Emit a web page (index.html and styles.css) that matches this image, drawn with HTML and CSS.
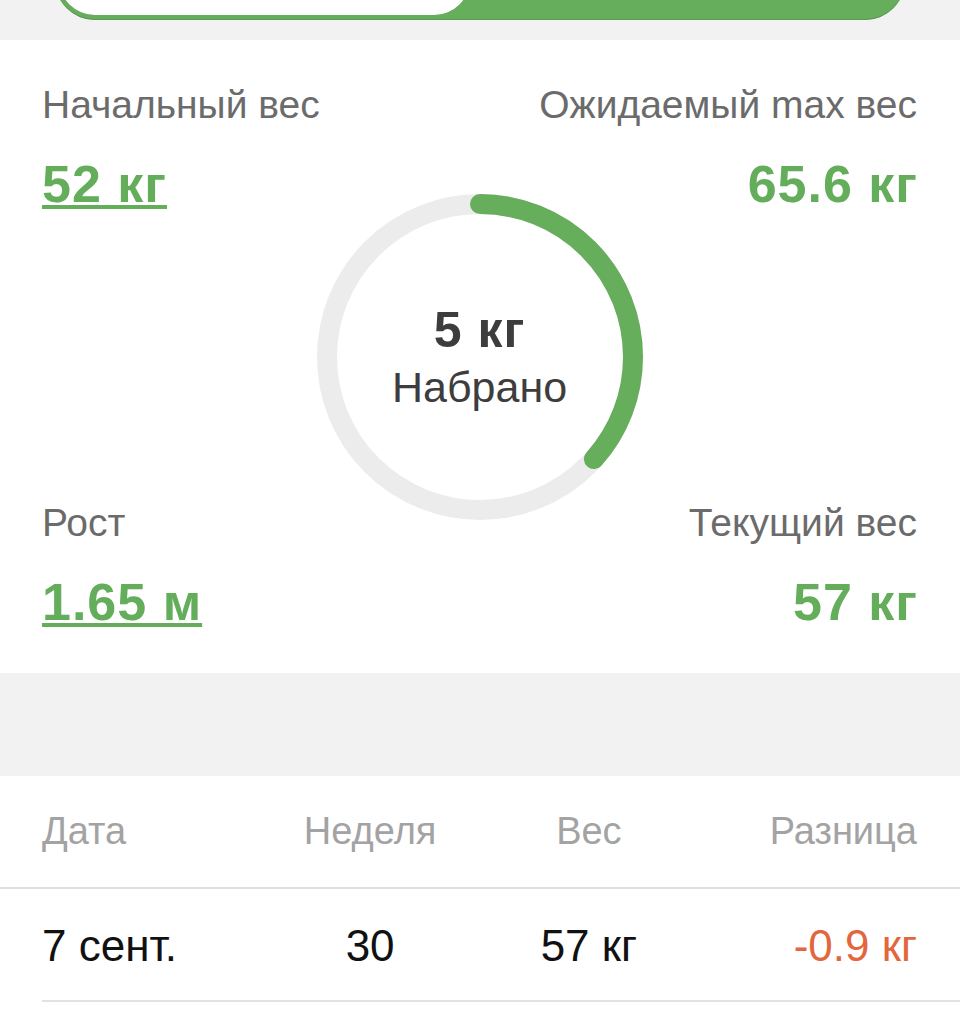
FILE: index.html
```html
<!DOCTYPE html>
<html>
<head>
  <meta charset="utf-8">
  <title>Вес</title>
  <link rel="stylesheet" href="styles.css">
</head>
<body>
  <div class="tabs-band">
    <div class="tabs">
      <div class="tab active"></div>
      <div class="tab"></div>
    </div>
  </div>

  <div class="summary">
    <div class="stat top-left">
      <div class="label">Начальный вес</div>
      <div class="value link">52 кг</div>
    </div>
    <div class="stat top-right">
      <div class="label">Ожидаемый max вес</div>
      <div class="value">65.6 кг</div>
    </div>

    <div class="ring">
      <svg width="326" height="326" viewBox="0 0 326 326">
        <circle class="ring-track" cx="163" cy="163" r="153"></circle>
        <circle class="ring-bar" cx="163" cy="163" r="153" stroke-dasharray="352 962" transform="rotate(-90 163 163)"></circle>
      </svg>
      <div class="ring-text">
        <div class="ring-value">5 кг</div>
        <div class="ring-label">Набрано</div>
      </div>
    </div>

    <div class="stat bottom-left">
      <div class="label">Рост</div>
      <div class="value link">1.65 м</div>
    </div>
    <div class="stat bottom-right">
      <div class="label">Текущий вес</div>
      <div class="value">57 кг</div>
    </div>
  </div>

  <div class="spacer"></div>

  <div class="log">
    <div class="log-head">
      <div>Дата</div>
      <div>Неделя</div>
      <div>Вес</div>
      <div>Разница</div>
    </div>
    <div class="log-row">
      <div>7 сент.</div>
      <div>30</div>
      <div>57 кг</div>
      <div class="diff">-0.9 кг</div>
    </div>
  </div>
</body>
</html>
```

FILE: styles.css
```css
body {
  margin: 0;
  background-color: #fff;
  font-family: "Liberation Sans", Arial, sans-serif;
  color: #111;
}
.tabs-band {
  height: 40px;
  overflow: hidden;
  background-color: #f2f2f2;
}
.tabs {
  display: flex;
  box-sizing: border-box;
  height: 80px;
  margin: -60px 55px 0 55px;
  padding: 0 4px 5px 4px;
  border-radius: 40px;
  background-color: #66ad5c;
  box-shadow: inset 0 -1px 0 #5a9a52;
}
.tab {
  flex: 1;
}
.tab.active {
  flex: 0 0 411px;
  border-radius: 0 0 36px 36px;
  background-color: #fff;
}

.summary {
  display: grid;
  grid-template-columns: 1fr 1fr;
  grid-template-rows: auto 289px auto;
  padding: 43px 43px 43px 42px;
}
.stat {
  position: relative;
  z-index: 1;
}
.top-left { grid-area: 1 / 1; }
.top-right { grid-area: 1 / 2; text-align: right; }
.bottom-left { grid-area: 3 / 1; }
.bottom-right { grid-area: 3 / 2; text-align: right; }
.label {
  font-size: 39px;
  line-height: 44px;
  color: #6b6b6b;
}
.value {
  margin-top: 29px;
  font-size: 52px;
  line-height: 56px;
  font-weight: bold;
  letter-spacing: 1px;
  color: #64ad5b;
}
.top-right .value,
.bottom-right .value {
  margin-right: -1px;
}
.value.link {
  text-decoration: underline;
  text-decoration-thickness: 4px;
  text-underline-offset: 3px;
}

.ring {
  grid-column: 1 / -1;
  grid-row: 1 / -1;
  justify-self: center;
  align-self: center;
  display: grid;
  place-items: center;
  width: 326px;
  height: 326px;
}
.ring svg,
.ring-text {
  grid-area: 1 / 1;
}
.ring-track {
  fill: none;
  stroke: #ececec;
  stroke-width: 20;
}
.ring-bar {
  fill: none;
  stroke: #66ad5c;
  stroke-width: 20;
  stroke-linecap: round;
}
.ring-text {
  text-align: center;
  color: #3d3d3d;
}
.ring-value {
  font-size: 50px;
  line-height: 60px;
  font-weight: bold;
  letter-spacing: 1px;
}
.ring-label {
  font-size: 43px;
  line-height: 54px;
}

.spacer {
  height: 103px;
  background-color: #f2f2f2;
}

.log-head,
.log-row {
  display: grid;
  grid-template-columns: repeat(4, 1fr);
  line-height: 48px;
}
.log-head > div:nth-child(2),
.log-head > div:nth-child(3),
.log-row > div:nth-child(2),
.log-row > div:nth-child(3) {
  text-align: center;
}
.log-head > div:last-child,
.log-row > div:last-child {
  text-align: right;
}
.log-head {
  padding: 31px 43px 32px 42px;
  border-bottom: 2px solid #dedede;
  font-size: 38px;
  color: #a3a3a3;
}
.log-row {
  margin-left: 42px;
  padding: 33px 43px 30px 0;
  border-bottom: 2px solid #e2e2e2;
  font-size: 44px;
}
.diff {
  color: #e2673c;
}
```
